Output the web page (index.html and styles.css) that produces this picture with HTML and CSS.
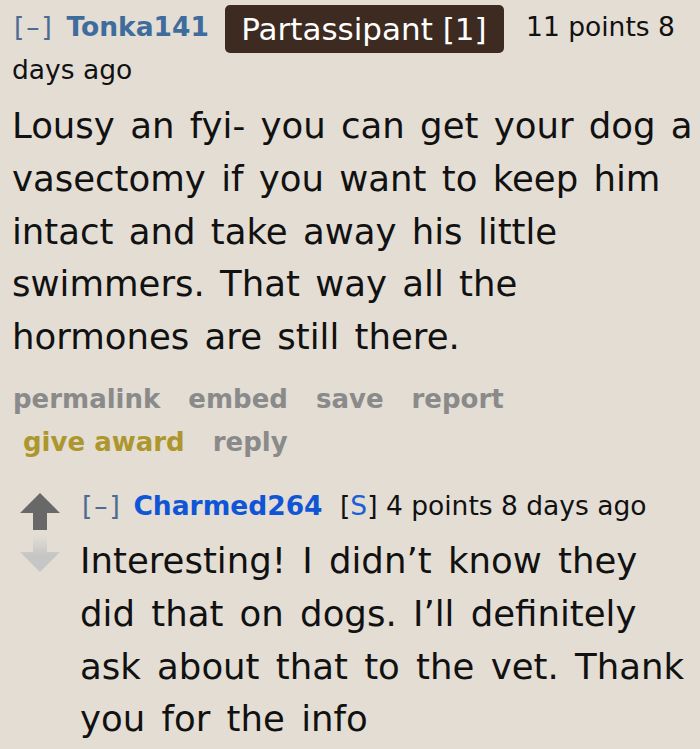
FILE: index.html
```html
<!DOCTYPE html>
<html>
<head>
<meta charset="utf-8">
<link rel="stylesheet" href="styles.css">
</head>
<body>
<div class="comment">
  <p class="tagline"><a class="expand">[–]</a> <a class="author">Tonka141</a> <span class="flair">Partassipant [1]</span> <span class="score">11 points</span> 8 days ago</p>
  <div class="md">Lousy an fyi- you can get your dog a vasectomy if you want to keep him intact and take away his little swimmers. That way all the hormones are still there.</div>
  <ul class="buttons">
    <li>permalink</li>
    <li>embed</li>
    <li>save</li>
    <li>report</li>
    <li class="award">give award</li>
    <li>reply</li>
  </ul>
  <div class="child">
    <div class="midcol">
      <svg class="arrows" width="40" height="80" viewBox="0 0 40 80">
        <defs>
          <linearGradient id="fade" x1="0" y1="0" x2="0" y2="1">
            <stop offset="0" stop-color="#e3ddd4"/>
            <stop offset="0.55" stop-color="#c6c6c6"/>
          </linearGradient>
        </defs>
        <path d="M20 0 L40 20 L27 20 L27 37 L13 37 L13 20 L0 20 Z" fill="#686868"/>
        <path d="M13 42 L27 42 L27 59 L40 59 L20 79 L0 59 L13 59 Z" fill="url(#fade)"/>
      </svg>
    </div>
    <div class="entry">
      <p class="tagline"><a class="expand">[–]</a> <a class="author submitter">Charmed264</a> <span class="op">[<span class="s">S</span>]</span> <span class="score">4 points</span> 8 days ago</p>
      <div class="md">Interesting! I didn’t know they did that on dogs. I’ll definitely ask about that to the vet. Thank you for the info</div>
    </div>
  </div>
</div>
</body>
</html>
```

FILE: styles.css
```css
html, body {
  margin: 0;
  padding: 0;
  background: #e3ddd4;
}
body {
  font-family: "DejaVu Sans", Verdana, sans-serif;
  color: #111;
}
.comment {
  padding: 5px 0 0 12px;
}
.tagline {
  margin: 0;
  font-size: 26.5px;
  line-height: 33px;
}
.expand {
  color: #4d6c92;
  letter-spacing: 2px;
  margin-left: 2px;
}
.author {
  color: #3e6c9c;
  font-weight: bold;
  margin-left: 4px;
}
.flair {
  display: inline-block;
  background: #3d2a20;
  color: #fff;
  font-size: 31px;
  line-height: 48px;
  padding: 0 17px 0 16px;
  border-radius: 5px;
  margin: 0 14px 0 8px;
  vertical-align: -4px;
}
.md {
  font-size: 35.5px;
  line-height: 52.8px;
  word-spacing: 4px;
  margin-top: 14px;
}
.buttons {
  list-style: none;
  margin: 14.5px 0 0 0;
  padding: 0 0 0 1px;
  display: flex;
  flex-wrap: wrap;
  width: 560px;
  font-size: 26px;
  line-height: 43px;
  font-weight: bold;
  color: #8a8a8a;
}
.buttons li {
  margin-right: 28px;
}
.buttons li.award {
  color: #ad972c;
  padding-left: 10px;
}
.child {
  display: flex;
  margin-top: 25px;
  margin-left: 8px;
}
.midcol {
  width: 60px;
  flex: none;
  padding-top: 4px;
}
.entry {
  flex: 1;
}
.submitter {
  color: #0f55d6;
  margin-left: 3px;
  margin-right: 9px;
}
.op .s {
  color: #1a5fd6;
}
.child .md {
  margin-top: 12.5px;
  word-spacing: 5px;
}
```
